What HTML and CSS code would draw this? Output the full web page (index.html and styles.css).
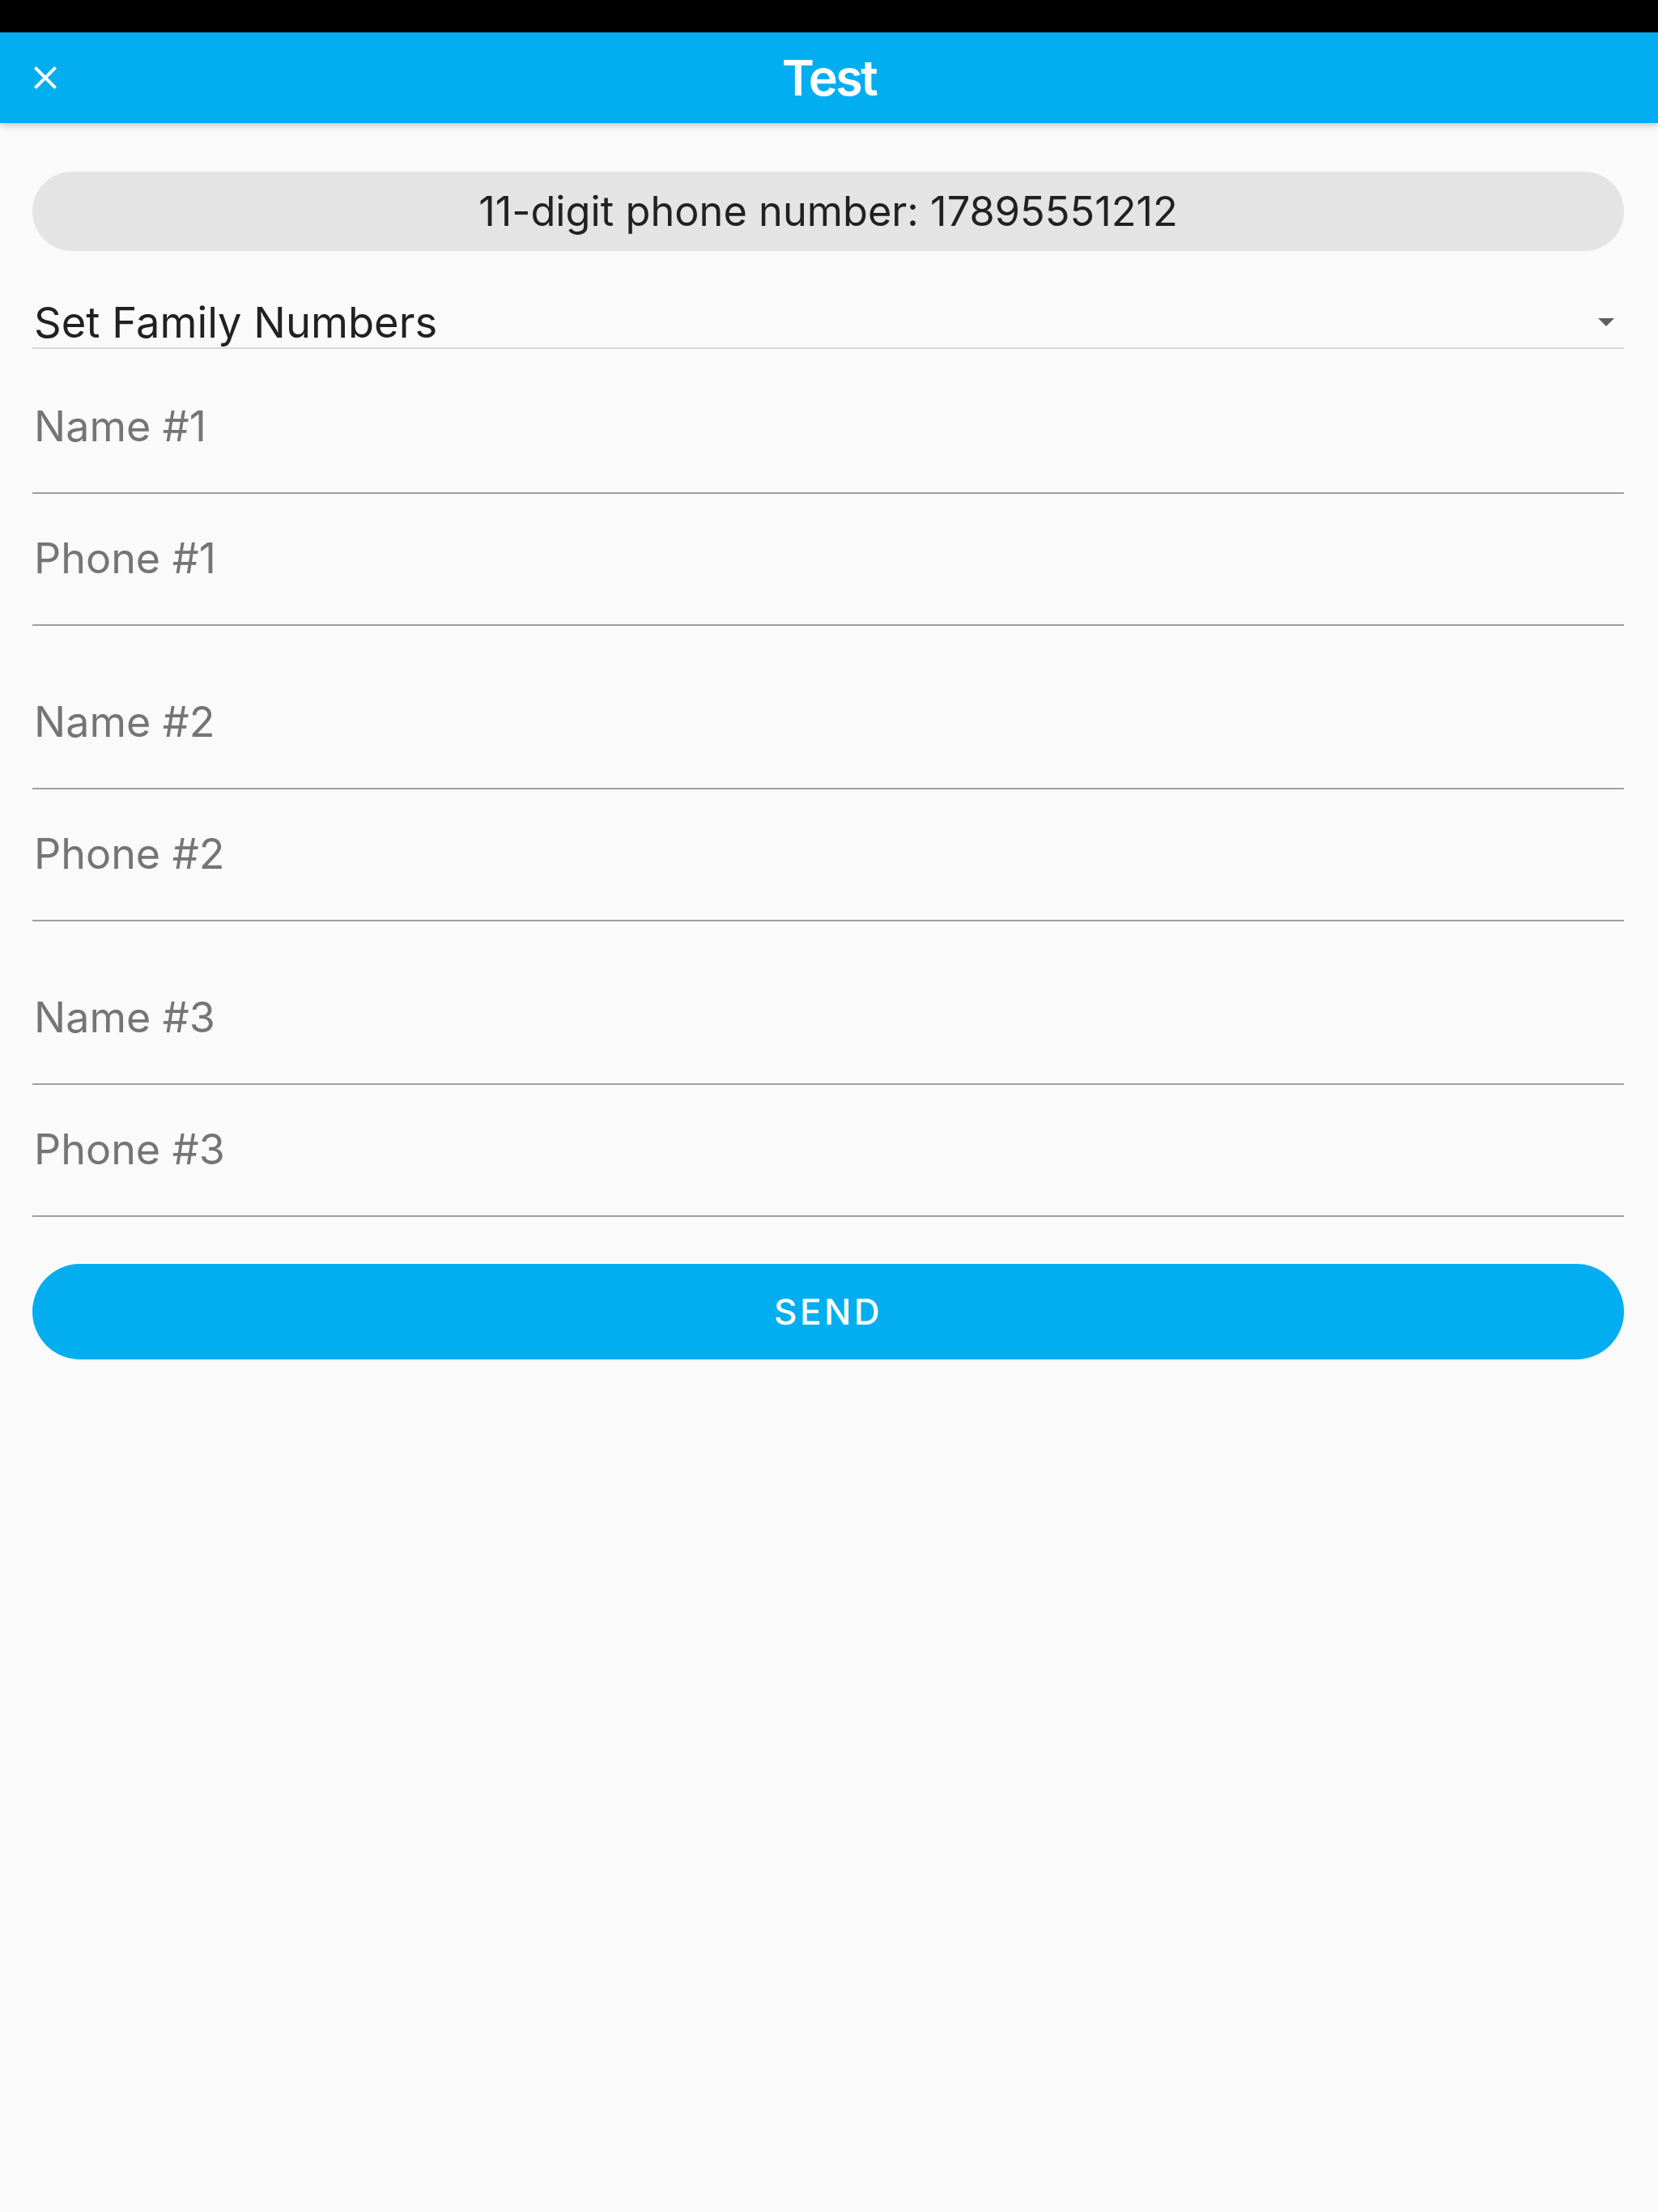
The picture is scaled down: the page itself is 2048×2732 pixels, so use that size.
FILE: index.html
```html
<!DOCTYPE html>
<html lang="en">
<head>
<meta charset="utf-8">
<title>Test</title>
<link rel="stylesheet" href="styles.css">
</head>
<body>
<div class="status-bar"></div>
<header class="app-bar">
  <button class="close-btn" aria-label="Close">
    <svg viewBox="0 0 24 24" width="48" height="48"><path d="M19 6.41 17.59 5 12 10.59 6.41 5 5 6.41 10.59 12 5 17.59 6.41 19 12 13.41 17.59 19 19 17.59 13.41 12z" fill="#ffffff"/></svg>
  </button>
  <h1 class="title">Test</h1>
</header>
<main class="content">
  <div class="pill">11-digit phone number: 17895551212</div>
  <div class="dropdown">
    <span class="dropdown-label">Set Family Numbers</span>
    <span class="dropdown-arrow"></span>
  </div>
  <section class="group first">
    <div class="field">Name #1</div>
    <div class="field">Phone #1</div>
  </section>
  <section class="group">
    <div class="field">Name #2</div>
    <div class="field">Phone #2</div>
  </section>
  <section class="group">
    <div class="field">Name #3</div>
    <div class="field">Phone #3</div>
  </section>
  <button class="send-btn">SEND</button>
</main>
</body>
</html>
```
FILE: styles.css
```css
* { box-sizing: border-box; }
html, body { margin: 0; padding: 0; }
body {
  width: 2048px;
  min-height: 2732px;
  background: #fafafa;
  font-family: Inter, "Noto Sans", "Liberation Sans", sans-serif;
  color: #212121;
}
.status-bar { height: 40px; background: #000; }
.app-bar {
  position: relative;
  height: 112px;
  background: #02aeef;
  display: flex;
  align-items: center;
  justify-content: center;
  box-shadow: 0 3px 8px rgba(0,0,0,0.22);
  z-index: 1;
}
.close-btn {
  position: absolute;
  left: 32px;
  top: 32px;
  width: 48px;
  height: 48px;
  padding: 0;
  border: 0;
  background: transparent;
  display: block;
}
.close-btn svg { display: block; }
.title {
  margin: 0;
  font-size: 61px;
  line-height: 1;
  font-weight: 600;
  color: #fff;
  letter-spacing: -2.5px;
}
.content {
  padding: 60px 42px 0 40px;
  display: flex;
  flex-direction: column;
}
.pill {
  height: 98px;
  border-radius: 49px;
  background: #e4e4e4;
  display: flex;
  align-items: center;
  justify-content: center;
  font-size: 50.5px;
  line-height: 1;
  color: #212121;
}
.dropdown {
  margin-top: 57px;
  display: flex;
  align-items: center;
  justify-content: space-between;
  border-bottom: 2px solid #d6d6d6;
}
.dropdown-label {
  font-size: 52.5px;
  line-height: 62px;
  color: #212121;
  padding-left: 2px;
}
.dropdown-arrow {
  width: 0;
  height: 0;
  border-left: 10px solid transparent;
  border-right: 10px solid transparent;
  border-top: 10px solid #5f5f5f;
  margin-right: 12px;
}
.group { margin-top: 39px; display: flex; flex-direction: column; }
.group.first { margin-top: 16px; }
.field {
  padding: 54px 0 55px 2px;
  font-size: 52px;
  line-height: 52px;
  color: #757575;
  border-bottom: 2px solid #a0a0a0;
}
.send-btn {
  margin-top: 58px;
  height: 118px;
  border: 0;
  border-radius: 59px;
  background: #02aeef;
  color: #fff;
  font-family: Inter, "Noto Sans", "Liberation Sans", sans-serif;
  font-size: 44px;
  font-weight: 500;
  letter-spacing: 3.5px;
  padding: 0;
}
```
